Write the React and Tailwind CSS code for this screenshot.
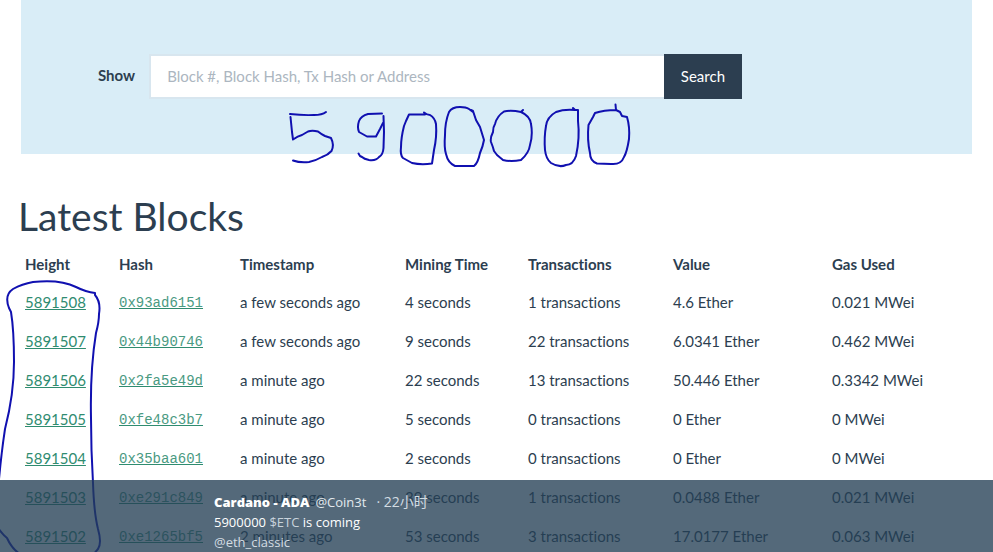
// App.jsx
import React from 'react';

const blocks = [
  { height: '5891508', hash: '0x93ad6151', time: 'a few seconds ago', mining: '4 seconds', txs: '1 transactions', value: '4.6 Ether', gas: '0.021 MWei' },
  { height: '5891507', hash: '0x44b90746', time: 'a few seconds ago', mining: '9 seconds', txs: '22 transactions', value: '6.0341 Ether', gas: '0.462 MWei' },
  { height: '5891506', hash: '0x2fa5e49d', time: 'a minute ago', mining: '22 seconds', txs: '13 transactions', value: '50.446 Ether', gas: '0.3342 MWei' },
  { height: '5891505', hash: '0xfe48c3b7', time: 'a minute ago', mining: '5 seconds', txs: '0 transactions', value: '0 Ether', gas: '0 MWei' },
  { height: '5891504', hash: '0x35baa601', time: 'a minute ago', mining: '2 seconds', txs: '0 transactions', value: '0 Ether', gas: '0 MWei' },
  { height: '5891503', hash: '0xe291c849', time: 'a minute ago', mining: '39 seconds', txs: '1 transactions', value: '0.0488 Ether', gas: '0.021 MWei' },
  { height: '5891502', hash: '0xe1265bf5', time: '2 minutes ago', mining: '53 seconds', txs: '3 transactions', value: '17.0177 Ether', gas: '0.063 MWei' },
];

const columns = [
  { label: 'Height', width: 'w-[94px]' },
  { label: 'Hash', width: 'w-[121px]' },
  { label: 'Timestamp', width: 'w-[165px]' },
  { label: 'Mining Time', width: 'w-[123px]' },
  { label: 'Transactions', width: 'w-[145px]' },
  { label: 'Value', width: 'w-[159px]' },
  { label: 'Gas Used', width: 'w-[146px]' },
];

// Blue pen notes drawn on top of the page
const strokes = [
  // 5
  'M290 114Q303 115.500 314 115Q322 115 326 112',
  'M290.500 117L292 132L293 139.500Q298 136 302 135L308 131.500Q312 130 318 131.500Q321 134 325 136L331 138Q334.500 145 331.500 151Q328 155 322 157Q315 161 309 162Q300 163 293 160.500',
  // 9
  'M382 113.500L368 114Q361 116 359 121Q357 127 359 132L367 136.500H376L380 129L383 123',
  'M383.500 116Q384.500 132 383.500 148Q383 155 379 157Q376 161 369 160Q364 159 362 157L360 156L358.500 153.500',
  // 0
  'M424 112.500Q427 115 430 115Q435 118 436 124Q437 137 434 150L432 163.500Q421 165 412 163L403 158Q400 155 401 147Q401 138 404 126L406 121L409 114.500H425',
  'M473 112L469 109Q466 107 460 107Q452 107 449 112Q445 122 445 135Q444 148 446 154Q448 163 455 166H474Q478 163 480 153Q483 146 484 140L480 127L476 120L473 111L471 110',
  'M523 110L521 112Q511 110 504 111.500Q497 116 495 124Q493 127 493 132Q490 138 491 142Q493 147 494 151L497 155L503 160Q511 162 521 160Q529 153 530 145Q533 135 531 124Q530 116 521 112',
  'M573 108L575 110Q564 109 556 112Q547 117 546 126Q544 137 545 150Q546 159 551 163Q559 168 566 165Q573 165 576 156Q580 138 578 121V110H573',
  'M615.500 104.500L616 110L620 112L622 116L627 117Q630 127 629 139Q627 152 624 157Q621 165 611 164L597 163.500Q590 161 590 153Q587 140 588.500 125L593 117L595 113Q604 110 616 110',
  // loop around the height column
  'M-2 490Q1 455 5 429Q14 394 14 362Q14 330 11 312L9 308Q4 295 13 289Q22 284 33 282Q60 279 76 287Q86 292 95 293L95 295Q101 302 99 314Q99 322 96 333Q90 370 91 418Q91 450 93 483Q94 513 98 529Q102 543 98 549L93 555',
  'M-2 528Q3 535 7 538Q12 549 20 554',
];

export default function App() {
  return (
    <div className="relative h-screen overflow-hidden bg-white font-[Lato,sans-serif] text-[15px] leading-[21px] text-[#2c3e50] [font-variant-ligatures:none]">
      <main className="px-5">
        {/* Search */}
        <form
          onSubmit={(e) => e.preventDefault()}
          className="mx-px flex items-center bg-[#d9edf7] pt-[54px] pr-[230px] pb-[55px] pl-[77px]"
        >
          <label htmlFor="search" className="mr-[14px] pb-0.5 font-bold">Show</label>
          <input
            id="search"
            type="text"
            placeholder="Block #, Block Hash, Tx Hash or Address"
            className="h-[45px] min-w-0 flex-1 border-2 border-r-0 border-[#d8e6ef] bg-white px-4 pb-0.5 outline-none placeholder:text-[#acb6c0]"
          />
          <button type="submit" className="h-[45px] bg-[#2c3e50] px-[17px] text-white">
            Search
          </button>
        </form>

        {/* Blocks */}
        <h1 className="mt-[41px] -ml-0.5 text-[39px] leading-[43px]">Latest Blocks</h1>
        <table className="mt-2 w-full table-fixed border-collapse text-left">
          <thead>
            <tr>
              {columns.map((col) => (
                <th key={col.label} className={`${col.width} px-[5px] pt-2 pb-2 font-bold`}>{col.label}</th>
              ))}
            </tr>
          </thead>
          <tbody>
            {blocks.map((block) => (
              <tr key={block.height} className="h-[39px]">
                <td className="px-[5px]">
                  <a href={`#${block.height}`} className="text-[#2f8c70] underline">{block.height}</a>
                </td>
                <td className="px-[5px]">
                  <a href={`#${block.hash}`} className="font-['Liberation_Mono',monospace] text-[14px] text-[#4a9a82] underline decoration-[#2f8c70]">{block.hash}</a>
                </td>
                <td className="px-[5px]">{block.time}</td>
                <td className="px-[5px]">{block.mining}</td>
                <td className="px-[5px]">{block.txs}</td>
                <td className="px-[5px]">{block.value}</td>
                <td className="px-[5px]">{block.gas}</td>
              </tr>
            ))}
          </tbody>
        </table>
      </main>

      <svg
        className="pointer-events-none absolute top-0 left-0"
        width="993"
        height="552"
        fill="none"
        stroke="#1010b0"
        strokeWidth="2"
        strokeLinecap="round"
        strokeLinejoin="round"
        aria-hidden="true"
      >
        {strokes.map((d) => <path key={d} d={d} />)}
      </svg>

      {/* Tweet caption */}
      <div className="absolute inset-x-0 bottom-0 h-[72px] overflow-hidden bg-[#243f54]/78 pt-3 pl-[214px] font-['Open_Sans','Noto_Sans_CJK_SC',sans-serif] text-[13px] leading-5 text-white">
        <p>
          <strong className="font-extrabold">Cardano - ADA</strong>
          <span className="ml-1.5 text-[#e3e9ee]">@Coin3t</span>
          <span className="ml-2.5 text-[14px] text-[#d3dce3]">· 22小时</span>
        </p>
        <p>5900000 <a href="#etc" className="text-[#c8d3dc]">$ETC</a> is coming</p>
        <p><a href="#eth_classic" className="text-[#d3dce3]">@eth_classic</a></p>
      </div>
    </div>
  );
}
